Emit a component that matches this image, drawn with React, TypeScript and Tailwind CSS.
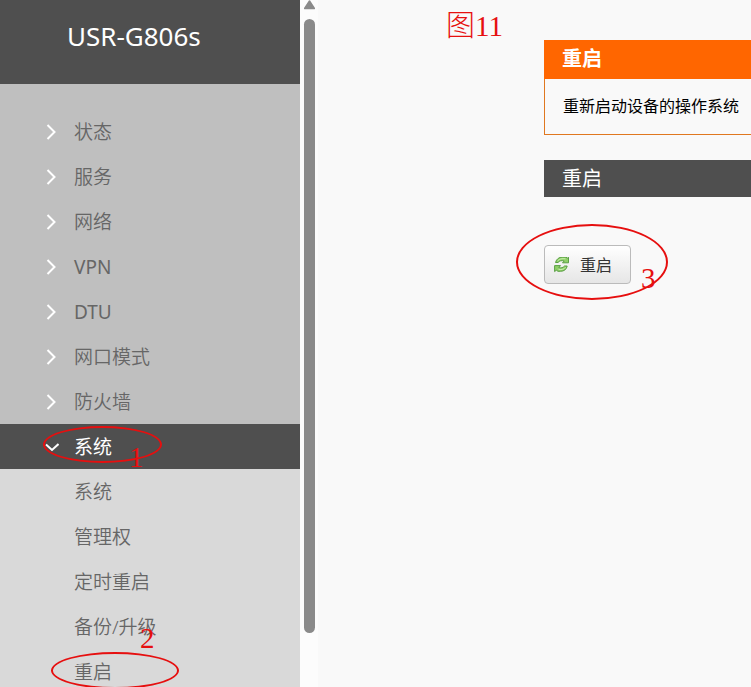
import React from "react";

const menu = [
  { label: "状态" },
  { label: "服务" },
  { label: "网络" },
  { label: "VPN", latin: true },
  { label: "DTU", latin: true },
  { label: "网口模式" },
  { label: "防火墙" },
];
const subMenu = ["系统", "管理权", "定时重启", "备份/升级", "重启"];

function Chevron({ open = false }: { open?: boolean }) {
  return (
    <svg className="h-4 w-4 shrink-0" viewBox="0 0 16 16" fill="none" stroke="#fff" strokeWidth="2" aria-hidden="true">
      <path d={open ? "M3 5.5 L9 11 L15.500 5" : "M4.500 1 L11.500 8 L4.500 15"} />
    </svg>
  );
}

function ReloadIcon() {
  return (
    <svg className="h-4 w-4 shrink-0" viewBox="0 0 16 16" aria-hidden="true">
      <g fill="#8fcf68" stroke="#5b9f45" strokeWidth="1" strokeLinejoin="round">
        <path d="M1.500 5.500 C2.500 2 5 .1 8.500 .1 H12 L13.200 1.200 L14.500 .2 V5.800 H8.500 L10.200 4 C7.500 3.200 5.500 3.800 4 5.500 Z" />
        <path d="M13.200 9 C12.500 12.500 10 14.300 6.500 14.300 H4 L2.300 13.200 L.6 14.600 V8.600 H6.500 L4.800 10.600 C7 11.200 9 10.800 10.500 9 Z" />
      </g>
      <path d="M3.700 3.800 C5.500 1.800 8 1.400 11.500 1.800 M11.500 10.300 C10 12.300 8 12.900 4.500 12.300" fill="none" stroke="#c9efb0" strokeWidth="1" />
    </svg>
  );
}

function Ring({ className }: { className: string }) {
  return <span aria-hidden="true" className={`pointer-events-none absolute rounded-[50%] border-2 border-[#e60f0f] ${className}`} />;
}

function Mark({ className, children }: { className: string; children: React.ReactNode }) {
  return (
    <span className={`pointer-events-none absolute font-['Liberation_Serif','Noto_Sans_CJK_SC',serif] text-[29px] leading-8 font-light whitespace-nowrap text-[#e60f0f] ${className}`}>
      {children}
    </span>
  );
}

export default function App() {
  return (
    <div className="flex h-screen overflow-hidden bg-[#f9f9f9] font-['Noto_Sans','Noto_Sans_CJK_SC',sans-serif]">
      <aside className="w-[300px] shrink-0 bg-[#bfbfbf]">
        <header className="bg-[#4f4f4f] pt-5 pb-8 pl-[67px]">
          <h1 className="text-[26px] leading-8 text-white">USR-G806s</h1>
        </header>
        <nav className="pt-[25px] text-[19px] leading-6 font-[350] text-[#666]">
          <ul>
            {menu.map(({ label, latin }) => (
              <li key={label} className={latin ? "font-normal" : undefined}>
                <a href="#" className="flex h-[45px] items-center gap-[15px] pl-[43px]">
                  <Chevron />
                  {label}
                </a>
              </li>
            ))}
            <li>
              <div className="relative bg-[#4f4f4f]">
                <a href="#" aria-expanded="true" className="flex h-[45px] items-center gap-[15px] pl-[43px] font-normal text-white">
                  <Chevron open />
                  系统
                </a>
                <Ring className="top-[2px] left-[43px] h-[37px] w-[119px]" />
                <Mark className="top-[17px] left-[129px]">1</Mark>
              </div>
              <ul className="bg-[#d9d9d9]">
                {subMenu.map((item, i) => (
                  <li key={item} className="relative">
                    <a href="#" className="flex h-[45px] items-center pl-[74px]">
                      {item}
                    </a>
                    {i === 3 && <Mark className="top-[18px] left-[140px]">2</Mark>}
                    {i === 4 && <Ring className="top-[3px] left-[51px] h-[37px] w-[128px]" />}
                  </li>
                ))}
              </ul>
            </li>
          </ul>
        </nav>
      </aside>

      <div className="flex w-[18px] shrink-0 flex-col bg-[#fcfcfc] pl-1" aria-hidden="true">
        <svg className="h-[19px] w-[11px] shrink-0" viewBox="0 0 11 19">
          <path d="M5.500 1 L10.500 8.500 H.5 Z" fill="#8a8a8a" stroke="#8a8a8a" strokeWidth="1.500" strokeLinejoin="round" />
        </svg>
        <div className="h-[614px] w-[11px] rounded-full bg-[#8a8a8a]" />
      </div>

      <main className="relative min-w-0 flex-1 pt-10 pl-[226px]">
        <Mark className="top-[10px] left-[128px]">图11</Mark>
        <section className="border-b border-l border-[#e07820]">
          <h2 className="-ml-px h-[39px] bg-[#ff6600] pl-[18px] text-[20px] leading-[38px] font-bold text-white">重启</h2>
          <p className="h-[55px] pl-[18px] text-[16px] leading-[54px] whitespace-nowrap text-black">重新启动设备的操作系统</p>
        </section>
        <section className="mt-[25px]">
          <h2 className="bg-[#4f4f4f] pl-[18px] text-[20px] leading-[37px] text-white">重启</h2>
          <div className="relative mt-12">
            <button type="button" className="flex h-[39px] w-[87px] items-center gap-[10px] rounded border border-[#bbb] bg-linear-to-b from-white to-[#e6e6e6] pl-[9px] text-[16px] leading-6 text-[#333]">
              <ReloadIcon />
              重启
            </button>
            <Ring className="-top-[21px] -left-[28px] h-[76px] w-[152px]" />
            <Mark className="top-[17px] left-[97px]">3</Mark>
          </div>
        </section>
      </main>
    </div>
  );
}
